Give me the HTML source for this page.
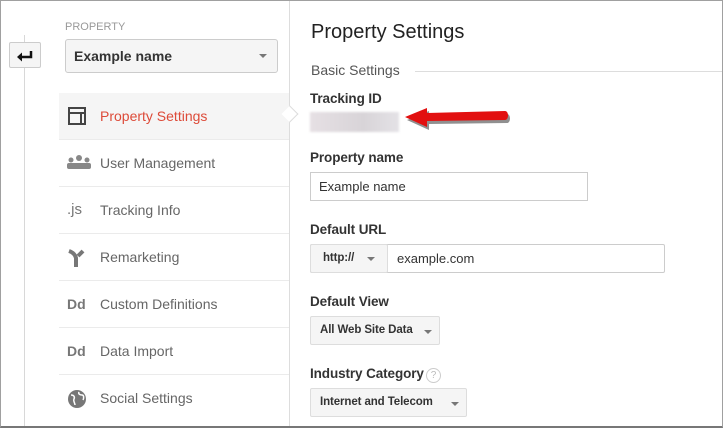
<!DOCTYPE html>
<html><head><style>
*{margin:0;padding:0;box-sizing:border-box}
body{width:723px;height:428px;overflow:hidden;background:#fff;font-family:"Liberation Sans",Arial,sans-serif;position:relative}
.frame{position:absolute;left:0;top:0;width:723px;height:428px;border:1px solid #a0a0a0;border-bottom:2px solid #777;pointer-events:none}
.a{position:absolute}
.vline{left:24px;top:35px;width:1px;height:393px;background:#d8d8d8}
.back{left:9px;top:42px;width:32px;height:26px;border:1px solid #ccc;border-radius:2px;background:#f5f5f5}
.sep{left:289px;top:0;width:1px;height:428px;background:#ddd}
.nav{left:59px;width:230px;height:47px;border-bottom:1px solid #ebebeb;font-size:14px;color:#666;line-height:46px}
.nav span{position:absolute;left:41px}
.ic{position:absolute;left:8px;color:#777;font-weight:bold;font-size:14px}
.lbl{left:310px;font-size:13.5px;font-weight:bold;color:#333;letter-spacing:-0.1px}
.btn{border:1px solid #ddd;border-radius:2px;background:#f5f5f5;font-size:11.5px;font-weight:bold;color:#333;line-height:26px;padding-left:9px;letter-spacing:-0.1px}
.tri{position:absolute;width:0;height:0;border-left:4px solid transparent;border-right:4px solid transparent;border-top:4px solid #777}
</style></head><body>
<div class="a vline"></div>
<div class="a back"><svg width="30" height="24" viewBox="0 0 30 24"><path d="M7 14l5-4.5v9z" fill="#111"/><path d="M11 14h10V8" stroke="#111" stroke-width="2.5" fill="none"/></svg></div>
<div class="a sep"></div>
<div class="a" style="left:65px;top:21px;font-size:11px;color:#999">PROPERTY</div>
<div class="a" style="left:65px;top:39px;width:213px;height:34px;border:1px solid #ccc;border-radius:3px;background:#f5f5f5;font-size:14px;font-weight:bold;color:#333;line-height:32px;padding-left:8px">Example name<div class="tri" style="left:193px;top:14px"></div></div>
<div class="a nav" style="top:93px;background:#f5f5f5;color:#dd4b39"><div class="a" style="left:9px;top:14px;width:18px;height:18px;border:2px solid #444"><div class="a" style="left:0;top:3px;width:14px;height:2px;background:#444"></div><div class="a" style="left:10px;top:3px;width:2px;height:11px;background:#444"></div></div><span>Property Settings</span></div>
<div class="a" style="left:284px;top:108px;width:12px;height:12px;background:#fff;border-left:1px solid #ddd;border-bottom:1px solid #ddd;transform:rotate(225deg)"></div>
<div class="a nav" style="top:140px"><svg class="ic" style="top:15px" width="24" height="14" viewBox="0 0 24 14"><circle cx="12" cy="3" r="3" fill="#888"/><circle cx="4" cy="5" r="2.5" fill="#888"/><circle cx="20" cy="5" r="2.5" fill="#888"/><rect x="0" y="8" width="24" height="6" rx="2" fill="#888"/></svg><span>User Management</span></div>
<div class="a nav" style="top:187px"><div class="ic" style="font-weight:normal;font-size:15px">.js</div><span>Tracking Info</span></div>
<div class="a nav" style="top:234px"><svg class="ic" style="top:15px" width="20" height="18" viewBox="0 0 20 18"><path d="M2 2c3 1 6 3 7 7v9M16 2l-5 5" stroke="#777" stroke-width="4" fill="none"/></svg><span>Remarketing</span></div>
<div class="a nav" style="top:281px"><div class="ic">Dd</div><span>Custom Definitions</span></div>
<div class="a nav" style="top:328px"><div class="ic">Dd</div><span>Data Import</span></div>
<div class="a nav" style="top:375px;border:none"><svg class="ic" style="top:14px" width="20" height="20" viewBox="0 0 20 20"><circle cx="10" cy="10" r="9" fill="#777"/><path d="M4 6c3 0 4 2 3 4s1 4 1 6M12 3c-1 2 1 3 3 3s2 3 1 5" stroke="#fff" stroke-width="1.5" fill="none"/></svg><span>Social Settings</span></div>

<div class="a" style="left:311px;top:21px;font-size:20px;color:#222">Property Settings</div>
<div class="a" style="left:311px;top:62px;font-size:14px;color:#555">Basic Settings</div>
<div class="a" style="left:415px;top:71px;width:308px;height:1px;background:#ddd"></div>
<div class="a lbl" style="top:91px">Tracking ID</div>
<div class="a" style="left:310px;top:112px;width:89px;height:20px;background:linear-gradient(90deg,#e6e0e4,#d8d4d8 60%,#e4e2e6);filter:blur(1px)"></div>
<svg class="a" style="left:400px;top:106px" width="115" height="24" viewBox="0 0 115 24"><path d="M6 12L28 3v5l78-2c4 0 4 9 0 9L28 16v6z" fill="#222" opacity=".5" transform="translate(1,2)"/><path d="M5 11L27 2v5l78-2c4 0 4 9 0 9L27 15v6z" fill="#e21010"/></svg>
<div class="a lbl" style="top:150px">Property name</div>
<div class="a" style="left:310px;top:172px;width:278px;height:29px;border:1px solid #ccc;font-size:13px;color:#333;line-height:27px;padding-left:8px">Example name</div>
<div class="a lbl" style="top:222px">Default URL</div>
<div class="a" style="left:310px;top:244px;width:355px;height:29px;border:1px solid #ccc;border-radius:2px;font-size:13px;color:#333"><div class="a btn" style="left:-1px;top:-1px;width:78px;height:29px;line-height:27px;padding-left:12px">http://<div class="tri" style="left:56px;top:12px"></div></div><div class="a" style="left:86px;top:6px">example.com</div></div>
<div class="a lbl" style="top:294px">Default View</div>
<div class="a btn" style="left:310px;top:316px;width:130px;height:29px">All Web Site Data<div class="tri" style="left:113px;top:13px"></div></div>
<div class="a lbl" style="top:366px">Industry Category</div>
<div class="a" style="left:426px;top:368px;width:15px;height:15px;border:1px solid #ccc;border-radius:50%;font-size:10px;color:#bbb;text-align:center;line-height:13px">?</div>
<div class="a btn" style="left:310px;top:388px;width:157px;height:29px">Internet and Telecom<div class="tri" style="left:140px;top:13px"></div></div>
<div class="frame"></div>
</body></html>
